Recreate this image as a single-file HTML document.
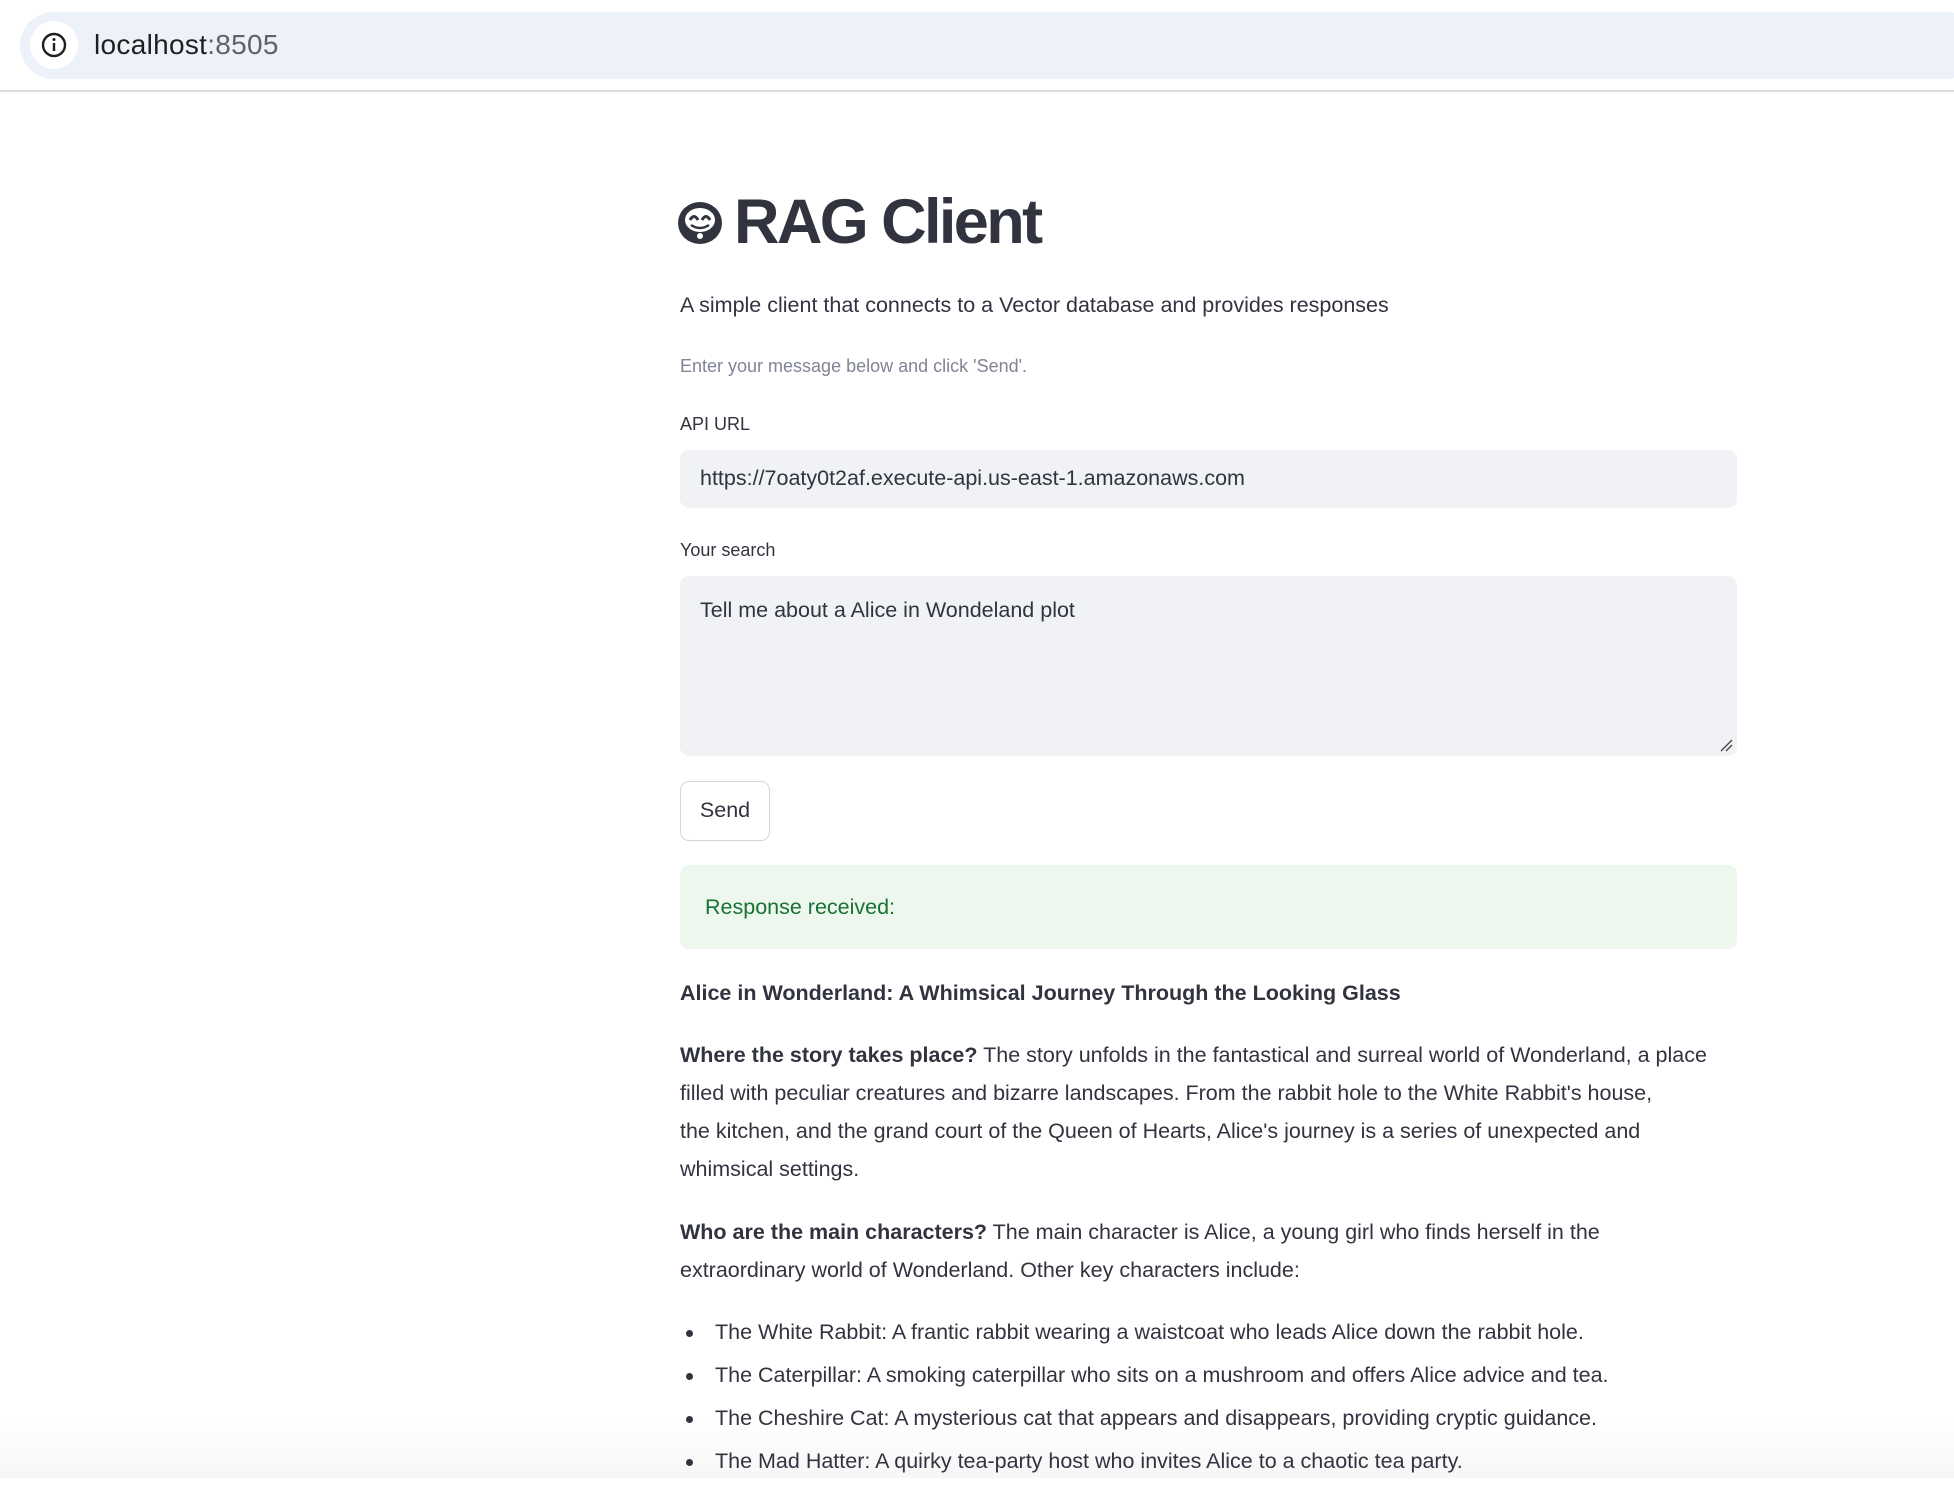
<!DOCTYPE html>
<html><head><meta charset="utf-8"><style>
*{margin:0;padding:0;box-sizing:border-box}
body{width:1954px;height:1478px;overflow:hidden;background:#fff;font-family:"Liberation Sans",sans-serif;color:#31333f;position:relative}
.bar{position:absolute;left:0;top:0;width:1954px;height:92px;background:#fff;border-bottom:2px solid #dcdcdf}
.pill{position:absolute;left:20px;top:12px;width:1960px;height:67px;background:#edf2fa;border-radius:34px}
.info{position:absolute;left:30px;top:21px;width:48px;height:48px;border-radius:50%;background:#fff}
.host{position:absolute;left:94px;top:29px;font-size:28px;color:#1f1f1f;letter-spacing:.3px}
.host span{color:#5f6368}
.abs{position:absolute;left:680px;white-space:nowrap}
h1{position:absolute;left:734px;top:186px;font-size:63px;font-weight:bold;letter-spacing:-2.6px;color:#31333f}
.box{position:absolute;left:680px;width:1057px;background:#f0f2f6;border-radius:9px}
.p{font-size:21.5px;line-height:38px}
ul{list-style:none}
li{position:relative;padding-left:35px;font-size:21.5px;height:43px}
li:before{content:"";position:absolute;left:6px;top:10px;width:7px;height:7px;border-radius:50%;background:#31333f}
.fade{position:absolute;left:0;top:1420px;width:1954px;height:58px;background:linear-gradient(to bottom,rgba(255,255,255,0),rgba(238,238,240,.5));z-index:-1}
</style></head><body>
<div class="fade"></div>
<div class="bar"><div class="pill"></div><div class="info"><svg width="48" height="48" viewBox="0 0 48 48"><circle cx="24" cy="24" r="11" fill="none" stroke="#1f1f1f" stroke-width="2.4"/><rect x="22.8" y="22" width="2.4" height="8" fill="#1f1f1f"/><circle cx="24" cy="18.5" r="1.5" fill="#1f1f1f"/></svg></div>
<div class="host">localhost<span>:8505</span></div></div>

<svg style="position:absolute;left:677px;top:201px" width="46" height="44" viewBox="0 0 46 44"><ellipse cx="23" cy="22" rx="22" ry="21" fill="#31333f"/><ellipse cx="23" cy="19" rx="15" ry="12" fill="#fff"/><path d="M13 19q4-7 8 0M25 19q4-7 8 0" stroke="#31333f" stroke-width="3" fill="none"/><path d="M14 24q9 6 18 0" stroke="#31333f" stroke-width="2.5" fill="none"/><circle cx="23" cy="35" r="3" fill="#fff"/></svg>
<h1>RAG Client</h1>

<div class="abs" style="top:293px;font-size:21.5px">A simple client that connects to a Vector database and provides responses</div>
<div class="abs" style="top:356px;font-size:18px;color:#808495">Enter your message below and click 'Send'.</div>
<div class="abs" style="top:414px;font-size:18px">API URL</div>
<div class="box" style="top:450px;height:58px"><div style="position:absolute;left:20px;top:16px;font-size:21.5px">https://7oaty0t2af.execute-api.us-east-1.amazonaws.com</div></div>
<div class="abs" style="top:540px;font-size:18px">Your search</div>
<div class="box" style="top:576px;height:180px"><div style="position:absolute;left:20px;top:22px;font-size:21.5px">Tell me about a Alice in Wondeland plot</div>
<svg style="position:absolute;right:4px;bottom:4px" width="14" height="14"><path d="M2 13L13 2M7 13L13 7" stroke="#444" stroke-width="1.3"/></svg></div>
<div style="position:absolute;left:680px;top:781px;width:90px;height:60px;border:1.5px solid #d4d5da;border-radius:9px;font-size:21.5px;text-align:center;line-height:57px">Send</div>
<div style="position:absolute;left:680px;top:865px;width:1057px;height:84px;background:#edf7ee;border-radius:9px"><div style="position:absolute;left:25px;top:30px;font-size:21.5px;color:#177233">Response received:</div></div>

<div class="abs p" style="top:974px;font-weight:bold">Alice in Wonderland: A Whimsical Journey Through the Looking Glass</div>
<div class="abs p" style="top:1036px"><b>Where the story takes place?</b> The story unfolds in the fantastical and surreal world of Wonderland, a place<br>filled with peculiar creatures and bizarre landscapes. From the rabbit hole to the White Rabbit's house,<br>the kitchen, and the grand court of the Queen of Hearts, Alice's journey is a series of unexpected and<br>whimsical settings.</div>
<div class="abs p" style="top:1213px"><b>Who are the main characters?</b> The main character is Alice, a young girl who finds herself in the<br>extraordinary world of Wonderland. Other key characters include:</div>
<ul class="abs" style="top:1320px">
<li>The White Rabbit: A frantic rabbit wearing a waistcoat who leads Alice down the rabbit hole.</li>
<li>The Caterpillar: A smoking caterpillar who sits on a mushroom and offers Alice advice and tea.</li>
<li>The Cheshire Cat: A mysterious cat that appears and disappears, providing cryptic guidance.</li>
<li>The Mad Hatter: A quirky tea-party host who invites Alice to a chaotic tea party.</li>
</ul>
</body></html>
